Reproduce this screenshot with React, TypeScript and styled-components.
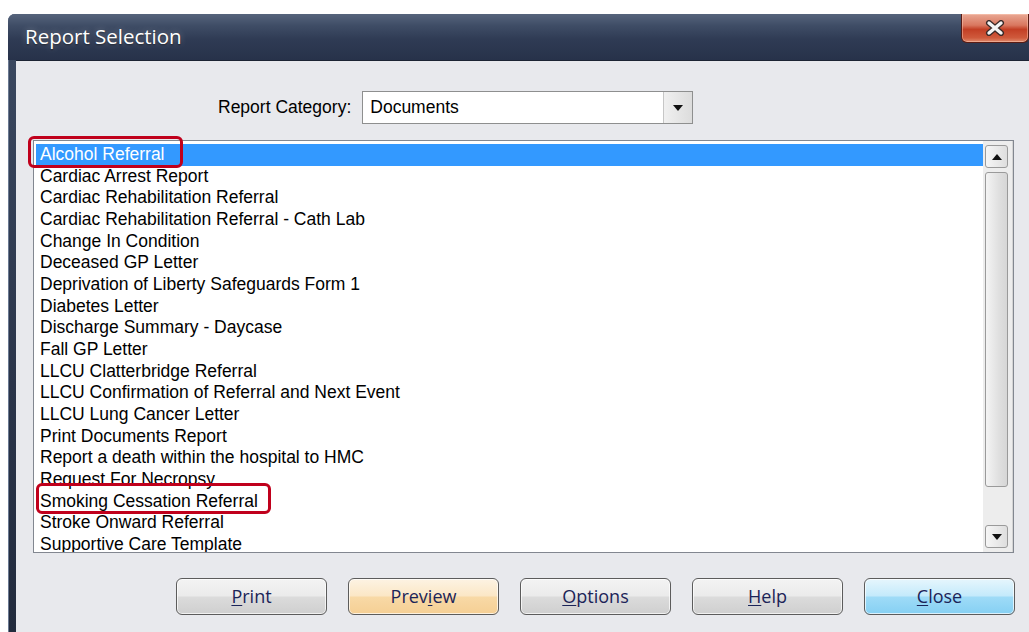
import React from "react";
import styled, { createGlobalStyle } from "styled-components";

const GlobalStyle = createGlobalStyle`
  html, body {
    margin: 0;
    padding: 0;
    background: #ffffff;
    overflow: hidden;
  }
`;

const Page = styled.div`
  width: 1029px;
  height: 632px;
  overflow: hidden;
  padding: 14px 0 0 8px;
  box-sizing: border-box;
`;

const Window = styled.div`
  width: 1040px;
  height: 618px;
  display: flex;
  flex-direction: column;
  background: linear-gradient(to bottom, #3c4a62 0%, #2a3449 60%, #222b3d 100%);
  border-radius: 7px 7px 0 0;
  box-shadow: inset 1px 1px 0 #6b7a92;
`;

const TitleBar = styled.div`
  height: 46px;
  display: flex;
  align-items: flex-start;
  justify-content: space-between;
  padding-left: 17px;
  border-radius: 7px 7px 0 0;
  background: linear-gradient(
    to bottom,
    #56647c 0%,
    #3f4d66 25%,
    #2f3b54 55%,
    #27324a 100%
  );
`;

const Title = styled.div`
  font-family: "Open Sans", "Noto Sans", sans-serif;
  font-size: 20.5px;
  color: #ffffff;
  margin-top: 8px;
  text-shadow: 0 0 6px rgba(255, 255, 255, 0.35), 0 1px 2px rgba(0, 0, 0, 0.6);
`;

const CloseBox = styled.div`
  width: 66px;
  height: 28px;
  margin-right: 19px;
  border: 1px solid #5a1c14;
  border-top: none;
  border-radius: 0 0 6px 6px;
  display: flex;
  align-items: center;
  justify-content: center;
  background: linear-gradient(
    to bottom,
    #e9a894 0%,
    #d9775f 40%,
    #c33f25 55%,
    #cf5a3c 85%,
    #e08a6c 100%
  );
  box-shadow: inset 0 0 0 1px rgba(255, 210, 190, 0.45);
`;

const Body = styled.div`
  flex: 1;
  margin-left: 8px;
  background: #e8e9ed;
  display: flex;
  flex-direction: column;
  border-top: 1px solid #1c2434;
`;

const CategoryRow = styled.div`
  display: flex;
  align-items: center;
  gap: 11px;
  margin: 30px 0 0 202px;
  height: 33px;
`;

const Label = styled.span`
  font-family: "Liberation Sans", Arial, sans-serif;
  font-size: 17.5px;
  color: #000000;
`;

const Combo = styled.div`
  width: 331px;
  height: 33px;
  box-sizing: border-box;
  border: 1px solid #8e8f8f;
  background: #ffffff;
  display: flex;
  align-items: stretch;
`;

const ComboText = styled.div`
  flex: 1;
  display: flex;
  align-items: center;
  padding-left: 7px;
  font-family: "Liberation Sans", Arial, sans-serif;
  font-size: 17.5px;
  color: #000000;
`;

const ComboButton = styled.div`
  width: 28px;
  display: flex;
  align-items: center;
  justify-content: center;
  border-left: 1px solid #c6c6c6;
  background: linear-gradient(to right, #f0f0f0, #dcdcdc);
`;

const ListWrap = styled.div`
  margin: 16px 0 0 17px;
  width: 981px;
  height: 413px;
  box-sizing: border-box;
  border: 1px solid #828790;
  background: #ffffff;
  display: flex;
  padding: 3px 3px 0 2px;
`;

/* rows may spill a marker past the top/left edge, but the list is cut at the bottom */
const Rows = styled.div`
  flex: 1;
  display: flex;
  flex-direction: column;
  clip-path: inset(-12px -12px 0 -12px);
`;

const Row = styled.div<{ $selected?: boolean }>`
  position: relative;
  height: 21.67px;
  line-height: 21.67px;
  flex-shrink: 0;
  padding-left: 4px;
  white-space: nowrap;
  font-family: "Liberation Sans", Arial, sans-serif;
  font-size: 17.5px;
  color: ${(p) => (p.$selected ? "#ffffff" : "#000000")};
  background: ${(p) => (p.$selected ? "#3399ff" : "transparent")};
`;

const Marker = styled.div<{ $left: number; $width: number }>`
  position: absolute;
  top: -8px;
  bottom: -2px;
  left: ${(p) => p.$left}px;
  width: ${(p) => p.$width}px;
  border: 3px solid #c0001c;
  border-radius: 6px;
  box-sizing: border-box;
  pointer-events: none;
`;

const ScrollBar = styled.div`
  width: 30px;
  background: #ededed;
  display: flex;
  flex-direction: column;
  gap: 4px;
  margin: -3px -3px 0 0;
  padding: 4px 5px 4px 2px;
  box-sizing: border-box;
  border-right: 1px solid #d4d4d4;
`;

const ScrollButton = styled.div`
  width: 23px;
  height: 23px;
  box-sizing: border-box;
  border: 1px solid #9a9a9a;
  border-radius: 3px;
  background: linear-gradient(to right, #f6f6f6, #dedede);
  display: flex;
  align-items: center;
  justify-content: center;
  flex-shrink: 0;
`;

const Thumb = styled.div`
  width: 23px;
  height: 315px;
  box-sizing: border-box;
  border: 1px solid #9a9a9a;
  border-radius: 3px;
  background: linear-gradient(to right, #f4f4f4, #e0e0e0 60%, #d6d6d6);
`;

const Track = styled.div`
  flex: 1;
`;

const ButtonRow = styled.div`
  display: flex;
  gap: 21px;
  margin: 25px 0 0 160px;
`;

type Tone = "plain" | "hot" | "default";

const tones: Record<Tone, string> = {
  plain: "linear-gradient(to bottom, #f3f3f3 0%, #ebebeb 48%, #dbdbdb 52%, #cfcfcf 100%)",
  hot: "linear-gradient(to bottom, #fdf3e3 0%, #fbe7c6 48%, #f8d9a6 52%, #f5cf94 100%)",
  default: "linear-gradient(to bottom, #e6f6fd 0%, #c4eafb 48%, #9edbf7 52%, #86d0f3 100%)",
};

const DialogButton = styled.div<{ $tone: Tone }>`
  width: 151px;
  height: 37px;
  box-sizing: border-box;
  border: 1px solid #5c5c5c;
  border-radius: 6px;
  background: ${(p) => tones[p.$tone]};
  box-shadow: inset 0 0 0 1px rgba(255, 255, 255, 0.7);
  display: flex;
  align-items: center;
  justify-content: center;
  font-family: "Open Sans", "Noto Sans", sans-serif;
  font-size: 18px;
  color: #1b2458;
  padding-bottom: 1px;

  u {
    text-underline-offset: 2px;
  }
`;

const items = [
  "Alcohol Referral",
  "Cardiac Arrest Report",
  "Cardiac Rehabilitation Referral",
  "Cardiac Rehabilitation Referral - Cath Lab",
  "Change In Condition",
  "Deceased GP Letter",
  "Deprivation of Liberty Safeguards Form 1",
  "Diabetes Letter",
  "Discharge Summary - Daycase",
  "Fall GP Letter",
  "LLCU Clatterbridge Referral",
  "LLCU Confirmation of Referral and Next Event",
  "LLCU Lung Cancer Letter",
  "Print Documents Report",
  "Report a death within the hospital to HMC",
  "Request For Necropsy",
  "Smoking Cessation Referral",
  "Stroke Onward Referral",
  "Supportive Care Template",
];

const marked: Record<string, { left: number; width: number }> = {
  "Alcohol Referral": { left: -8, width: 155 },
  "Smoking Cessation Referral": { left: 0, width: 235 },
};

const Triangle = ({ up }: { up?: boolean }) => (
  <svg width="10" height="6" viewBox="0 0 10 6">
    <polygon points={up ? "0,6 10,6 5,0" : "0,0 10,0 5,6"} fill="#111" />
  </svg>
);

const buttons: { label: string; key: number; tone: Tone }[] = [
  { label: "Print", key: 0, tone: "plain" },
  { label: "Preview", key: 4, tone: "hot" },
  { label: "Options", key: 0, tone: "plain" },
  { label: "Help", key: 0, tone: "plain" },
  { label: "Close", key: 0, tone: "default" },
];

export default function App() {
  return (
    <>
      <GlobalStyle />
      <Page>
        <Window>
          <TitleBar>
            <Title>Report Selection</Title>
            <CloseBox>
              <svg width="22" height="16" viewBox="0 0 22 16">
                <path
                  d="M5 3 L17 13 M17 3 L5 13"
                  stroke="#3a2a28"
                  strokeWidth="6"
                  strokeLinecap="round"
                />
                <path
                  d="M5 3 L17 13 M17 3 L5 13"
                  stroke="#f4f4f4"
                  strokeWidth="3.4"
                  strokeLinecap="round"
                />
              </svg>
            </CloseBox>
          </TitleBar>
          <Body>
            <CategoryRow>
              <Label>Report Category:</Label>
              <Combo>
                <ComboText>Documents</ComboText>
                <ComboButton>
                  <Triangle />
                </ComboButton>
              </Combo>
            </CategoryRow>
            <ListWrap>
              <Rows>
                {items.map((item, i) => (
                  <Row key={item} $selected={i === 0}>
                    {item}
                    {marked[item] && (
                      <Marker $left={marked[item].left} $width={marked[item].width} />
                    )}
                  </Row>
                ))}
              </Rows>
              <ScrollBar>
                <ScrollButton>
                  <Triangle up />
                </ScrollButton>
                <Thumb />
                <Track />
                <ScrollButton>
                  <Triangle />
                </ScrollButton>
              </ScrollBar>
            </ListWrap>
            <ButtonRow>
              {buttons.map((b) => (
                <DialogButton key={b.label} $tone={b.tone}>
                  {b.label.slice(0, b.key)}
                  <u>{b.label[b.key]}</u>
                  {b.label.slice(b.key + 1)}
                </DialogButton>
              ))}
            </ButtonRow>
          </Body>
        </Window>
      </Page>
    </>
  );
}
